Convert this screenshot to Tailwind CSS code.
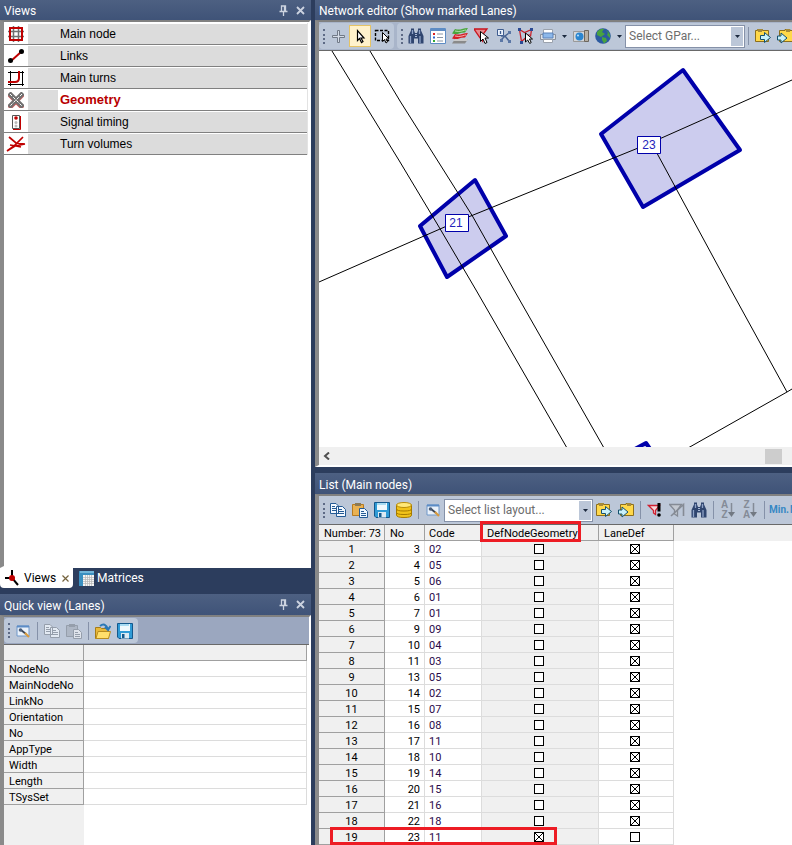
<!DOCTYPE html>
<html lang="en">
<head>
    <meta charset="UTF-8">
    <meta name="viewport" content="width=device-width, initial-scale=1.0">
    <script src="https://cdn.jsdelivr.net/npm/@tailwindcss/browser@4"></script>
    <title>Network editor</title>
</head>
<body class="bg-[#2c3d5d] font-['Roboto',sans-serif] text-xs text-black">
    <!-- shared icons -->
    <svg class="hidden">
        <symbol id="pin" viewBox="0 0 9 11"><path d="M2.500 6V1h4v5M5.500 1v5M.5 6.500h8M4.500 7v4" fill="none" stroke="#ccd3e0" stroke-width="1.300"/></symbol>
        <symbol id="close" viewBox="0 0 9 9"><path d="M1 1l7 7M8 1L1 8" stroke="#ccd3e0" stroke-width="1.800"/></symbol>
        <symbol id="caret" viewBox="0 0 5 3"><path d="M0 0h5L2.500 3z" fill="#1b293e"/></symbol>
        <symbol id="binoculars" viewBox="0 0 16 16">
            <path d="M3 .5h3v2l1 2.500h2l1-2.500v-2h3v2L15.500 8v7.500H10v-5H6v5H.5V8L3 2.500z" fill="#2f456f"/>
            <path d="M2.500 8v7M4.500 2v4M11.500 2v4M12 8v7" stroke="#8fa3c7" stroke-width="1.300"/>
            <path d="M7 6.500h2M7 8.500h2" stroke="#a9b9d6"/>
        </symbol>
        <symbol id="edit" viewBox="0 0 16 16">
            <path d="M2 3h12v10H2z" fill="#eaf1fa" stroke="#6f97c9"/>
            <path d="M2 3.500h12" stroke="#5c8cc6" stroke-width="2"/>
            <path d="M6 7l5 4" stroke="#3a4658" stroke-width="1.800"/>
            <circle cx="5.500" cy="7" r="1.800" fill="#4b5d78"/>
            <path d="M10 10l4 4" stroke="#d99a3c" stroke-width="2.200"/>
        </symbol>
        <symbol id="copy" viewBox="0 0 16 16">
            <path d="M.5 1.500h5.500l2.500 2.500v7.500h-8zM6.500 4.500h6l3 3v7h-9z" fill="#f4f9ff" stroke="currentColor"/>
            <path d="M2 4.500h3M2 6.500h4M2 8.500h4M8 7.500h4M8 9.500h6M8 11.500h6" stroke="currentColor"/>
        </symbol>
        <symbol id="save" viewBox="0 0 16 16">
            <path d="M.5.500h15v15H2l-1.500-1.500z" fill="#2f9bd6" stroke="#14588c"/>
            <path d="M3 1h10v7H3z" fill="#eef8fd"/><path d="M3 1h9v2H3z" fill="#a7dbf3"/>
            <path d="M4 10h8v5.500H4z" fill="#dceaf3"/><path d="M5 11h2.500v4H5z" fill="#14588c"/>
        </symbol>
        <symbol id="folder-out" viewBox="0 0 16 16">
            <path d="M.5 2.500h2v-1h5v1h6v11H.5z" fill="#ffd84a" stroke="#8d6f1d"/>
            <path d="M3 1h4v3H3z" fill="#a58a3a"/>
            <path d="M5.500 7.500h4v-3l6 5-6 5v-3h-4z" fill="#c9f1fa" stroke="#14506e"/>
        </symbol>
        <symbol id="folder-in" viewBox="0 0 16 16">
            <path d="M2.500 2.500H8v-1h5v1h2.500v11h-13z" fill="#ffd84a" stroke="#8d6f1d"/>
            <path d="M9 1h4v3H9z" fill="#a58a3a"/>
            <path d="M.5 8h3.500V5l6 5-6 5v-3H.5z" fill="#c9f1fa" stroke="#14506e"/>
        </symbol>
    </svg>

    <div class="flex h-screen gap-1 overflow-hidden">
        <aside class="flex w-[311px] shrink-0 flex-col">
            <section class="flex flex-1 flex-col">
                <header class="flex h-5 shrink-0 items-center bg-linear-to-b from-[#4d6082] to-[#3f5378] pr-1 pl-1 text-white">
                    <h2 class="flex-1 pt-0.5">Views</h2>
                    <button aria-label="Pin views" class="mr-2"><svg class="h-[11px] w-[9px]"><use href="#pin"/></svg></button>
                    <button aria-label="Close views"><svg class="mr-0.5 h-[9px] w-[9px]"><use href="#close"/></svg></button>
                </header>
                <div class="flex-1 border-y-2 border-r-2 border-l-4 border-t-[#808080] border-r-white border-b-white border-l-[#8a8a8a] bg-white pt-px">
                    <ul id="views" class="mr-px border-r border-[#e3e3e3] font-['Liberation_Sans',sans-serif]">
                        <li class="flex h-[22px] border-t border-b border-t-white border-b-[#808080]">
                            <svg class="mx-1 mt-0.5 h-4 w-4" viewBox="0 0 16 16"><path d="M5.500 0v16M10.500 0v16M0 5.500h16M0 10.500h16" stroke="#707070" stroke-width="1.500"/><path d="M2 2h12v12H2z" fill="none" stroke="#c00000" stroke-width="2"/></svg>
                            <a href="#" class="flex flex-1 items-center bg-[#dcdcdc] pl-8">Main node</a>
                        </li>
                        <li class="flex h-[22px] border-t border-b border-t-white border-b-[#808080]">
                            <svg class="mx-1 mt-0.5 h-4 w-4" viewBox="0 0 16 16"><path d="M3 13L13 4" stroke="#c00000" stroke-width="2"/><circle cx="2.500" cy="12.500" r="2.500"/><circle cx="13.500" cy="3.500" r="2.500"/></svg>
                            <a href="#" class="flex flex-1 items-center bg-[#dcdcdc] pl-8">Links</a>
                        </li>
                        <li class="flex h-[22px] border-t border-b border-t-white border-b-[#808080]">
                            <svg class="mx-1 mt-0.5 h-4 w-4" viewBox="0 0 16 16"><path d="M0 2.500h16M0 14.500h16M2.500 1v15M14.500 1v15" stroke="#000"/><path d="M0 12h7q4 0 4-4V1" fill="none" stroke="#c00000" stroke-width="2"/></svg>
                            <a href="#" class="flex flex-1 items-center bg-[#dcdcdc] pl-8">Main turns</a>
                        </li>
                        <li class="flex h-[22px] border-t border-b border-t-white border-b-[#808080]">
                            <svg class="mx-1 mt-0.5 h-4 w-4" viewBox="0 0 16 16"><path d="M1 2l14 14M15 2L1 16" stroke="#c06060" stroke-width="5"/><path d="M1 1l14 14M15 1L1 15" stroke="#707070" stroke-width="4.500"/><path d="M2 2l12 12M14 2L2 14" stroke="#fff" stroke-dasharray="3 1.500"/></svg>
                            <a href="#" class="flex flex-1 items-center border-l-30 border-[#dcdcdc] pl-0.5 text-[13px] font-bold text-[#b80000]">Geometry</a>
                        </li>
                        <li class="flex h-[22px] border-t border-b border-t-white border-b-[#808080]">
                            <svg class="mx-1 mt-0.5 h-4 w-4" viewBox="0 0 16 16"><path d="M4.500 1.500h7v13h-7z" fill="#fff" stroke="#555"/><path d="M12.500 2v13.500H5" fill="none" stroke="#c00000"/><circle cx="8" cy="4" r="1.800" fill="#c00000"/><circle cx="8" cy="8.500" r="1.500" fill="#bbb"/><circle cx="8" cy="12" r="1.500" fill="#bbb"/></svg>
                            <a href="#" class="flex flex-1 items-center bg-[#dcdcdc] pl-8">Signal timing</a>
                        </li>
                        <li class="flex h-[22px] border-t border-b border-t-white border-b-[#808080]">
                            <svg class="mx-1 mt-0.5 h-4 w-4 overflow-visible" viewBox="0 0 16 16"><path d="M1 1l7 6 9 1M15 1L6 10l-7 5M-1 15l8-5 10-2M2 9l6 1 5 1" fill="none" stroke="#c00000" stroke-width="1.700"/></svg>
                            <a href="#" class="flex flex-1 items-center bg-[#dcdcdc] pl-8">Turn volumes</a>
                        </li>
                    </ul>
                </div>
            </section>

            <nav class="mb-1.5 flex h-5 shrink-0">
                <a href="#" class="flex w-[73px] items-center rounded-b-sm bg-white pl-1">
                    <svg class="mr-1 h-4 w-4" viewBox="0 0 16 16"><path d="M1 8h7M8 0v8l6 7" fill="none" stroke="#000" stroke-width="2"/><circle cx="8" cy="8" r="3" fill="#c00000"/></svg>
                    Views
                    <svg class="ml-1.5 h-[7px] w-[7px]" viewBox="0 0 7 7"><path d="M.5.500l6 6M6.500.500l-6 6" stroke="#75633d" stroke-width="1.200"/></svg>
                </a>
                <a href="#" class="flex items-center pl-1.5 text-white">
                    <svg class="mr-0.5 h-4 w-4" viewBox="0 0 16 16"><path d="M0 1h15v4H4v11H0z" fill="#3a8fc0"/><path d="M1 2h14" stroke="#a9dbf2"/><path d="M4 5h11v11H4z" fill="#f4f4f4"/><path d="M6.500 5v11M8.500 5v11M10.500 5v11M12.500 5v11M4 7.500h11M4 9.500h11M4 11.500h11M4 13.500h11" stroke="#b5b5b5" stroke-width=".7"/></svg>
                    Matrices
                </a>
            </nav>

            <section class="flex h-[251px] shrink-0 flex-col">
                <header class="flex h-[21px] shrink-0 items-center bg-linear-to-b from-[#4d6082] to-[#3f5378] px-1 text-white">
                    <h2 class="flex-1 pt-0.5">Quick view (Lanes)</h2>
                    <button aria-label="Pin quick view" class="mr-2"><svg class="h-[11px] w-[9px]"><use href="#pin"/></svg></button>
                    <button aria-label="Close quick view"><svg class="mr-0.5 h-[9px] w-[9px]"><use href="#close"/></svg></button>
                </header>
                <div class="flex flex-1 flex-col border-t-2 border-r-2 border-l-4 border-t-[#808080] border-r-white border-l-[#8a8a8a] bg-white">
                    <div class="flex h-[27px] shrink-0 items-center bg-[#9ba7bf]">
                        <div class="flex h-[25px] items-center rounded-sm bg-[#bcc7d8] pr-0.5">
                            <span class="mr-0.5 ml-1 h-[15px] border-l-2 border-dotted border-[#5d6a85]"></span>
                            <button aria-label="Edit" class="flex w-[22px] justify-center"><svg class="h-4 w-4"><use href="#edit"/></svg></button>
                            <span class="mx-[3px] h-[18px] w-px bg-[#8591a8]"></span>
                            <button aria-label="Copy" class="flex w-[22px] justify-center text-[#858d99]"><svg class="h-4 w-4 opacity-70"><use href="#copy"/></svg></button>
                            <button aria-label="Paste" class="flex w-[22px] justify-center text-[#858d99]">
                                <svg class="h-4 w-4 opacity-70" viewBox="0 0 16 16"><path d="M.5 2.500h11v11H.5z" fill="#a9b1bd" stroke="#858d99"/><path d="M3 1h6v3H3z" fill="#858d99"/><path d="M7.500 6.500h5l3 3v6h-8z" fill="#eef1f5" stroke="#858d99"/><path d="M9 9.500h3M9 11.500h5M9 13.500h5" stroke="#858d99"/></svg>
                            </button>
                            <span class="mx-[3px] h-[18px] w-px bg-[#8591a8]"></span>
                            <button aria-label="Open" class="flex w-[22px] justify-center">
                                <svg class="h-4 w-4" viewBox="0 0 16 16"><path d="M.5 4.500h5l1 1h7v10H.5z" fill="#e8b93a" stroke="#a67c18"/><path d="M1 15.500l2-7h12.500l-2 7z" fill="#ffdf6b" stroke="#b88c1e"/><path d="M5 3Q10-1 13 6M10 4l3 3 2.500-4" fill="none" stroke="#2b78b5" stroke-width="2"/></svg>
                            </button>
                            <button aria-label="Save" class="flex w-[22px] justify-center"><svg class="h-4 w-4"><use href="#save"/></svg></button>
                        </div>
                    </div>
                    <div class="flex-1 border-t border-[#696969] bg-[linear-gradient(90deg,#f0f0f0_80px,#fff_80px)]">
                        <table class="w-[303px] table-fixed border-separate border-spacing-0 text-[11px] leading-[13px]">
                            <thead>
                                <tr>
                                    <th class="h-4 w-20 border-r border-b border-[#a0a0a0] bg-[#f0f0f0]"></th>
                                    <th class="h-4 border-r border-b border-[#a0a0a0] bg-[#f0f0f0]"></th>
                                </tr>
                            </thead>
                            <tbody id="lane-rows"></tbody>
                        </table>
                    </div>
                </div>
            </section>
        </aside>

        <main class="flex min-w-0 flex-1 flex-col overflow-hidden">
            <section class="mb-1.5 flex min-h-0 flex-1 flex-col">
                <h2 class="h-5 shrink-0 bg-linear-to-b from-[#4d6082] to-[#3f5378] pl-1 leading-[22px] text-white">Network editor (Show marked Lanes)</h2>
                <div class="flex min-h-0 flex-1 flex-col border-t-2 border-b-2 border-l-4 border-t-[#808080] border-b-white border-l-[#8a8a8a] bg-white">
                    <div class="flex h-7 shrink-0 items-center gap-[3px] overflow-hidden bg-[#a9b5ca]">
                        <div class="flex h-[26px] shrink-0 items-center rounded-sm bg-[#bcc7d8] pr-px">
                            <span class="mr-0.5 ml-1 h-[15px] border-l-2 border-dotted border-[#5d6a85]"></span>
                            <button aria-label="Insert" class="flex w-[22px] justify-center"><svg class="h-4 w-4" viewBox="0 0 16 16"><path d="M7.500 2.500h2v5h5v2h-5v5h-2v-5h-5v-2h5z" fill="#d6dde8" stroke="#707987"/></svg></button>
                            <button aria-label="Select" class="flex h-[22px] w-[22px] items-center justify-center border border-[#e5c365] bg-[#fff2cc]"><svg class="h-4 w-4" viewBox="0 0 16 16"><path d="M5.500 2.500v10l2-2 2 4 1.500-1-2-3.500h3z" fill="#fff" stroke="#000" stroke-width="1.200"/></svg></button>
                            <button aria-label="Select area" class="flex w-[22px] justify-center"><svg class="h-4 w-4" viewBox="0 0 16 16"><path d="M1.500 2.500h13v10h-13z" fill="none" stroke="#000" stroke-width="1.400" stroke-dasharray="3 1.500"/><path d="M8.500 4.500v9l2-2 1.500 3.500 1.500-1-1.500-3h3z" fill="#fff" stroke="#000"/></svg></button>
                        </div>
                        <div class="flex h-[26px] shrink-0 items-center rounded-l-sm bg-[#bcc7d8]">
                            <span class="mr-0.5 ml-1 h-[15px] border-l-2 border-dotted border-[#5d6a85]"></span>
                            <button aria-label="Find" class="flex w-[22px] justify-center"><svg class="h-4 w-4"><use href="#binoculars"/></svg></button>
                            <button aria-label="Legend" class="flex w-[22px] justify-center"><svg class="h-4 w-4" viewBox="0 0 16 16"><path d="M.5.500h15v15H.5z" fill="#fff" stroke="#5e8cc4"/><path d="M1 2h14" stroke="#5e8cc4" stroke-width="2"/><path d="M3 5h2v2H3z" fill="#d22"/><path d="M3 8.500h2v2H3z" fill="#36c"/><path d="M3 12h2v2H3z" fill="#3a3"/><path d="M7 6h6M7 9.500h6M7 13h6" stroke="#8b96a5"/></svg></button>
                            <button aria-label="Layers" class="flex w-[22px] justify-center"><svg class="h-4 w-4" viewBox="0 0 16 16"><path d="M0 15.500l3-4.500h13l-3 4.500z" fill="#8a8a8a"/><path d="M1 13l2-2h13l-1 2z" fill="#c9c9c9"/><path d="M0 10.500L3 6q4 1 7 0t6-1l-3 4.500q-4 0-6 1t-7 0z" fill="#d51f26"/><path d="M3 8q4 1 7 0t4-1" fill="none" stroke="#f6b3b5"/><path d="M0 5.500L3 1q4 1 7 0t6-1l-3 4.500q-4 0-6 1t-7 0z" fill="#49a63c"/><path d="M3 3q4 1 7 0t4-1" fill="none" stroke="#b6dfae"/></svg></button>
                            <button aria-label="Filter" class="flex w-[22px] justify-center"><svg class="h-4 w-4" viewBox="0 0 16 16"><path d="M0 1h13L8.500 7v6L5.500 9z" fill="#e98a8f" stroke="#c8141e" stroke-width="1.300"/><path d="M6.500 3.500v10l2.500-2.500 2 4.500 2-1-2-4.500h3.500z" fill="#fff" stroke="#000"/></svg></button>
                            <button aria-label="Nodes" class="flex w-[22px] justify-center"><svg class="h-4 w-4" viewBox="0 0 16 16"><path d="M5 8h4l4-3M9 8l4 5M9 8l-4 4" fill="none" stroke="#4a6594" stroke-width="1.500"/><path d="M1.500 1.500h6v6h-6z" fill="#e9f0fb" stroke="#3f5d90"/><path d="M4.500 3v3" stroke="#3f5d90" stroke-width="1.300"/><path d="M12 3h3v3h-3zM12 12h3v3h-3zM4 11h3v3H4z" fill="#5b77a6"/></svg></button>
                            <button aria-label="Select polygon" class="flex w-[22px] justify-center"><svg class="h-4 w-4" viewBox="0 0 16 16"><path d="M1.500 1.500l5 3 7-3-1 7M1.500 1.500l2 12 8-7" fill="none" stroke="#c8202a" stroke-width="1.300"/><path d="M0 0h3v3H0zM12 0h3v3h-3zM2 13h3v3H2z" fill="#2b4a94"/><path d="M7.500 5v9l2.200-2 2 3.500 1.500-1-1.700-3.500h3z" fill="#fff" stroke="#000"/></svg></button>
                            <button aria-label="Print" class="flex w-[22px] justify-center"><svg class="h-4 w-4" viewBox="0 0 16 16"><path d="M3.500 1.500h9v5h-9z" fill="#fff" stroke="#9ba2ad"/><path d="M.5 6.500h15v5H.5z" fill="#dfe2e6" stroke="#8a919c"/><path d="M3 5h10v5H3z" fill="#8db8ea" stroke="#5a81b8"/><path d="M3.500 11.500h9v3h-9z" fill="#fff" stroke="#9ba2ad"/></svg></button>
                            <button aria-label="Print options" class="flex w-[11px] justify-center"><svg class="h-[3px] w-[5px]"><use href="#caret"/></svg></button>
                            <button aria-label="Screenshot" class="flex w-[22px] justify-center"><svg class="h-4 w-4" viewBox="0 0 16 16"><path d="M.5 3.500h11v10H.5z" fill="#d5d7da" stroke="#999"/><path d="M11.500 2.500h4v11h-4z" fill="#b7b0a4" stroke="#6d675e"/><circle cx="6.500" cy="8.500" r="4" fill="#2b86d0"/><circle cx="5" cy="7.500" r="1" fill="#bfe2fb"/></svg></button>
                            <button aria-label="Background map" class="flex w-[22px] justify-center"><svg class="h-4 w-4" viewBox="0 0 16 16"><circle cx="8" cy="8" r="7.800" fill="#2b5aa0"/><path d="M2 4q3-4 7-3L7 4l3 2-4 3-4-2zM11 2q5 3 4 8l-3-3 1-2zM7 9l4 1 1 3-3 2.500L7 12z" fill="#48a23f"/></svg></button>
                            <button aria-label="Map options" class="flex w-[11px] justify-center"><svg class="h-[3px] w-[5px]"><use href="#caret"/></svg></button>
                            <div class="relative w-[120px]">
                                <select aria-label="Graphic parameters" class="block h-[23px] w-full appearance-none border border-[#8591a8] bg-white pl-[3px] text-[#6d6d6d]"><option>Select GPar...</option></select>
                                <span class="pointer-events-none absolute top-0.5 right-0.5 flex h-[19px] w-3 items-center justify-center bg-[#bcc7d8]"><svg class="h-[3px] w-[5px]"><use href="#caret"/></svg></span>
                            </div>
                            <span class="mx-[3px] h-[18px] w-px bg-[#8591a8]"></span>
                            <button aria-label="Open parameters" class="flex w-[22px] justify-center"><svg class="h-4 w-4"><use href="#folder-out"/></svg></button>
                            <button aria-label="Save parameters" class="flex w-[22px] justify-center"><svg class="h-4 w-4"><use href="#folder-in"/></svg></button>
                        </div>
                    </div>
                    <svg class="min-h-0 w-full flex-1 border-t border-[#696969] font-['Liberation_Sans',sans-serif]" viewBox="319 51 473 397" preserveAspectRatio="xMinYMin slice">
                        <g fill="#ccccee" stroke="#0000aa" stroke-width="4" stroke-linejoin="round">
                            <path d="M683 70L740 150L643 207L601 134z"/>
                            <path d="M475 180L506 236L447 277L420 226z"/>
                            <path d="M620 457L646 443L660 463z"/>
                        </g>
                        <g fill="none" stroke="#000" stroke-width="1">
                            <path d="M319 282L456 222L648 144L792 80"/>
                            <path d="M332 51L400 162L439 227L476 290L567 448"/>
                            <path d="M370 51L400 101L458 193L473 217L514 290L604 448"/>
                            <path d="M652 144L731 290L787 392L688 448M787 392L792 389"/>
                        </g>
                        <g fill="#fff" stroke="#0000aa">
                            <path d="M445.500 214.500h23v17h-23zM637.500 136.500h23v17h-23z"/>
                        </g>
                        <g fill="#2222bb" font-size="12" text-anchor="middle">
                            <text x="456" y="227">21</text>
                            <text x="649" y="149">23</text>
                        </g>
                    </svg>
                    <div class="flex h-[18px] shrink-0 items-center justify-between bg-[#f0f0f0] pr-2.5 pl-1">
                        <button aria-label="Scroll left"><svg class="h-2 w-2" viewBox="0 0 8 8"><path d="M6 .5L2 4l4 3.500" fill="none" stroke="#505050" stroke-width="2"/></svg></button>
                        <span class="h-[15px] w-[17px] bg-[#cdcdcd]"></span>
                    </div>
                </div>
            </section>

            <section class="flex h-[372px] shrink-0 flex-col">
                <h2 class="h-[21px] shrink-0 bg-linear-to-b from-[#4d6082] to-[#3f5378] pl-1 leading-6 text-white">List (Main nodes)</h2>
                <div class="flex min-h-0 flex-1 flex-col border-t-2 border-l-4 border-t-[#808080] border-l-[#8a8a8a] bg-white">
                    <div class="flex h-7 shrink-0 items-center overflow-hidden bg-[#bcc7d8]">
                        <span class="mr-0.5 ml-1 h-[15px] shrink-0 border-l-2 border-dotted border-[#5d6a85]"></span>
                        <button aria-label="Copy list" class="flex w-[22px] shrink-0 justify-center text-[#245a94]"><svg class="h-4 w-4"><use href="#copy"/></svg></button>
                        <button aria-label="Paste list" class="flex w-[22px] shrink-0 justify-center"><svg class="h-4 w-4" viewBox="0 0 16 16"><path d="M.5 2.500h11v11H.5z" fill="#e9b152" stroke="#b67a20"/><path d="M3 1h6v3H3z" fill="#8c7a55"/><path d="M7.500 6.500h5l3 3v6h-8z" fill="#eef7ff" stroke="#245a94"/><path d="M9 9.500h3M9 11.500h5M9 13.500h5" stroke="#245a94"/></svg></button>
                        <button aria-label="Save list" class="flex w-[22px] shrink-0 justify-center"><svg class="h-4 w-4"><use href="#save"/></svg></button>
                        <button aria-label="Database" class="flex w-[22px] shrink-0 justify-center"><svg class="h-4 w-4" viewBox="0 0 16 16"><path d="M.5 3v10q0 2.500 7.500 2.500t7.500-2.500V3z" fill="#f2c319" stroke="#a67b00"/><ellipse cx="8" cy="3" rx="7.500" ry="2.500" fill="#ffe878" stroke="#b98c0a"/><path d="M.5 7q0 2 7.500 2t7.500-2M.5 10.500q0 2 7.500 2t7.500-2" fill="none" stroke="#a67b00"/></svg></button>
                        <span class="mx-[3px] h-[18px] w-px shrink-0 bg-[#8591a8]"></span>
                        <button aria-label="Edit layout" class="flex w-[22px] shrink-0 justify-center"><svg class="h-4 w-4"><use href="#edit"/></svg></button>
                        <div class="relative w-[149px] shrink-0">
                            <select aria-label="List layout" class="block h-[23px] w-full appearance-none border border-[#8591a8] bg-white pl-[3px] text-[#6d6d6d]"><option>Select list layout...</option></select>
                            <span class="pointer-events-none absolute top-0.5 right-0.5 flex h-[19px] w-3 items-center justify-center bg-[#bcc7d8]"><svg class="h-[3px] w-[5px]"><use href="#caret"/></svg></span>
                        </div>
                        <button aria-label="Open layout" class="flex w-[22px] shrink-0 justify-center"><svg class="h-4 w-4"><use href="#folder-out"/></svg></button>
                        <button aria-label="Save layout" class="flex w-[22px] shrink-0 justify-center"><svg class="h-4 w-4"><use href="#folder-in"/></svg></button>
                        <span class="mx-[3px] h-[18px] w-px shrink-0 bg-[#8591a8]"></span>
                        <button aria-label="Show active only" class="flex w-[22px] shrink-0 justify-center"><svg class="h-4 w-4" viewBox="0 0 16 16"><path d="M1.500 3.500h11l-4 5v4l-2-1.500V8.500z" fill="#f6d5d8" stroke="#d02030" stroke-width="1.300"/><path d="M12 1v8.500" stroke="#000" stroke-width="3"/><circle cx="12" cy="13" r="1.800"/></svg></button>
                        <button aria-label="Clear filter" class="flex w-[22px] shrink-0 justify-center"><svg class="h-4 w-4" viewBox="0 0 16 16"><path d="M.5 2.500h12L8.500 8v6l-3-2V8z" fill="#c4c9d1" stroke="#858b95" stroke-width="1.300"/><path d="M2 14L14.500 2.500V14" fill="none" stroke="#858b95" stroke-width="1.600"/></svg></button>
                        <button aria-label="Find in list" class="flex w-[22px] shrink-0 justify-center"><svg class="h-4 w-4"><use href="#binoculars"/></svg></button>
                        <span class="mx-[3px] h-[18px] w-px shrink-0 bg-[#8591a8]"></span>
                        <button aria-label="Sort ascending" class="flex w-[22px] shrink-0 items-center justify-center font-['Liberation_Sans',sans-serif] text-[10px] leading-[10px] font-bold text-[#848b97]">
                            <span>A<br>Z</span><svg class="h-4 w-[7px]" viewBox="0 0 7 16"><path d="M3.500 1v10" stroke="#848b97" stroke-width="1.500"/><path d="M0 10h7l-3.500 5z" fill="#727983"/></svg>
                        </button>
                        <button aria-label="Sort descending" class="flex w-[22px] shrink-0 items-center justify-center font-['Liberation_Sans',sans-serif] text-[10px] leading-[10px] font-bold text-[#848b97]">
                            <span>Z<br>A</span><svg class="h-4 w-[7px]" viewBox="0 0 7 16"><path d="M3.500 1v10" stroke="#848b97" stroke-width="1.500"/><path d="M0 10h7l-3.500 5z" fill="#727983"/></svg>
                        </button>
                        <span class="mx-[3px] h-[18px] w-px shrink-0 bg-[#8591a8]"></span>
                        <button class="w-[22px] shrink-0 text-[10px] font-bold text-[#3787c4]">Min.</button>
                        <button class="w-[22px] shrink-0 text-[10px] font-bold text-[#3787c4]">Max.</button>
                    </div>
                    <div class="min-h-0 flex-1 border-t border-[#696969] bg-[linear-gradient(#f0f0f0_16px,#fff_16px)]">
                        <table class="w-[355px] table-fixed border-separate border-spacing-0 text-[11px] leading-[13px]">
                            <thead class="text-left">
                                <tr>
                                    <th class="h-4 w-[66px] border-r border-b border-[#a0a0a0] bg-[#f0f0f0] pt-px pl-[5px] font-normal whitespace-nowrap">Number: 73</th>
                                    <th class="w-10 border-r border-b border-[#a0a0a0] bg-[#f0f0f0] pt-px pl-[5px] font-normal">No</th>
                                    <th class="w-[57px] border-r border-b border-[#a0a0a0] bg-[#f0f0f0] pt-px pl-1 font-normal">Code</th>
                                    <th class="relative w-[117px] border-r border-b border-[#a0a0a0] bg-[#f0f0f0] pt-px pl-[5px] font-normal">
                                        DefNodeGeometry
                                        <span class="absolute -top-1 -left-0.5 h-[21px] w-[101px] border-3 border-[#ed1c24]"></span>
                                    </th>
                                    <th class="w-[75px] border-r border-b border-[#a0a0a0] bg-[#f0f0f0] pt-px pl-[5px] font-normal">LaneDef</th>
                                </tr>
                            </thead>
                            <tbody id="node-rows"></tbody>
                        </table>
                    </div>
                </div>
            </section>
        </main>
    </div>
</body>
    <script>
        const laneRows = document.getElementById("lane-rows");
        const nodeRows = document.getElementById("node-rows");

        const attributes = ["NodeNo", "MainNodeNo", "LinkNo", "Orientation", "No", "AppType", "Width", "Length", "TSysSet"];
        const nodes = [
            [3, "02"], [4, "05"], [5, "06"], [6, "01"], [7, "01"], [9, "09"], [10, "04"],
            [11, "03"], [13, "05"], [14, "02"], [15, "07"], [16, "08"], [17, "11"], [18, "10"],
            [19, "14"], [20, "15"], [21, "16"], [22, "18"], [23, "11"]
        ];

        const checkbox = (label, checked) =>
            `<input type="checkbox" aria-label="${label}" ${checked ? "checked" : ""} class="mx-auto block h-2.5 w-2.5 appearance-none border border-black bg-white checked:bg-[linear-gradient(45deg,transparent_44%,#000_44%,#000_56%,transparent_56%),linear-gradient(-45deg,transparent_44%,#000_44%,#000_56%,transparent_56%)]">`;

        laneRows.innerHTML = attributes.map(name => `
            <tr>
                <th class="h-4 border-r border-b border-[#a0a0a0] bg-[#f0f0f0] pt-0.5 pl-[5px] text-left font-normal">${name}</th>
                <td class="h-4 border-r border-b border-[#dcdcdc] bg-white"></td>
            </tr>`).join("");

        nodeRows.innerHTML = nodes.map(([no, code], i) => {
            const marked = no === 23;
            return `
            <tr>
                <th class="relative h-4 border-r border-b border-[#a0a0a0] bg-[#f0f0f0] pt-0.5 font-normal">
                    ${i + 1}
                    ${marked ? '<span class="absolute -top-0.5 left-[11px] z-10 h-[18px] w-[227px] border-3 border-[#ed1c24]"></span>' : ""}
                </th>
                <td class="border-r border-b border-[#dcdcdc] pt-px pr-1 text-right">${no}</td>
                <td class="border-r border-b border-[#dcdcdc] pt-px pl-1 text-[#2a0a4a]">${code}</td>
                <td class="border-r border-b border-[#dcdcdc] bg-[#f0f0f0] pr-0.5">${checkbox("DefNodeGeometry " + no, marked)}</td>
                <td class="border-r border-b border-[#dcdcdc] pr-0.5">${checkbox("LaneDef " + no, !marked)}</td>
            </tr>`;
        }).join("");
    </script>
</html>
